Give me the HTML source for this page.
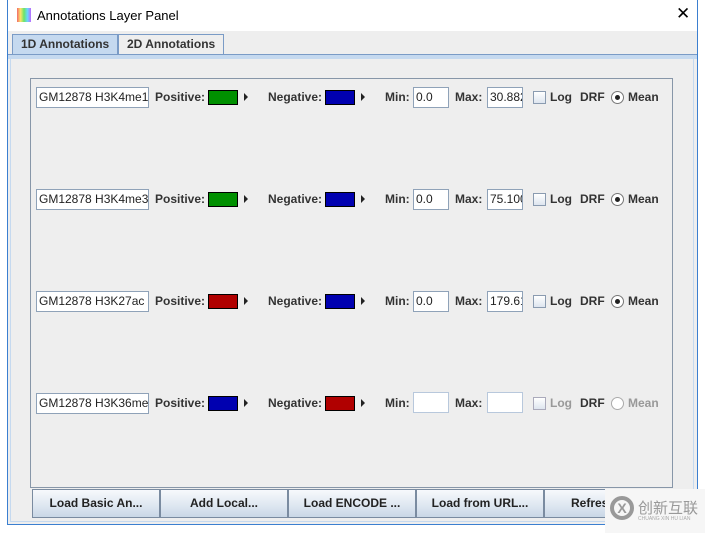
<!DOCTYPE html>
<html><head><style>
*{box-sizing:border-box}
body{margin:0;width:705px;height:533px;background:#fff;position:relative;overflow:hidden;font-family:"Liberation Sans",sans-serif}
.a{position:absolute}
.win{left:7px;top:0;width:691px;height:525px;border:1px solid #3b7fd0;border-top:none;background:#eeeeee}
.title{left:8px;top:0;width:689px;height:31px;background:#fff}
.lbl{font-size:12px;font-weight:bold;color:#333;position:absolute}
.tf{position:absolute;background:#fff;border:1px solid #8fa2b8;height:21px;font-size:12px;color:#222;padding:2px 0 0 2px;white-space:nowrap;overflow:hidden}
.sw{position:absolute;width:30px;height:15px;border:1px solid #000}
.ar{position:absolute;width:0;height:0;border-left:4px solid #222;border-top:4px solid transparent;border-bottom:4px solid transparent}
.cb{position:absolute;width:13px;height:13px;border:1px solid #8a9bb0;background:linear-gradient(#fff,#dde5ef)}
.rb{position:absolute;width:13px;height:13px;border:1px solid #777;border-radius:50%;background:#fff}
.btn{position:absolute;top:489px;height:29px;border:1px solid #7a8ba0;background:linear-gradient(#f7f9fc,#dde6f0 60%,#c9d7e6);font-size:12px;font-weight:bold;color:#222;text-align:center;line-height:27px}
</style></head><body>
<div class="a win"></div>
<div class="a title"></div>
<div class="a" style="left:17px;top:8px;width:14px;height:14px;background:linear-gradient(90deg,#e44,#fd4,#4d4,#4cf,#a4f);opacity:.8"></div>
<div class="a" style="left:37px;top:8px;font-size:13px;color:#000">Annotations Layer Panel</div>
<div class="a" style="left:676px;top:4px;font-size:17px;color:#000">✕</div>
<div class="a" style="left:12px;top:34px;width:106px;height:20px;background:#c5d9ef;border:1px solid #7a9bc6;border-bottom:none;font-size:12px;font-weight:bold;color:#333;padding:2px 0 0 8px">1D Annotations</div>
<div class="a" style="left:118px;top:34px;width:106px;height:20px;background:#eee;border:1px solid #7a9bc6;border-bottom:none;font-size:12px;font-weight:bold;color:#333;padding:2px 0 0 8px">2D Annotations</div>
<div class="a" style="left:8px;top:54px;width:689px;height:5px;background:#c5d9ef;border-top:1px solid #7a9bc6"></div>
<div class="a" style="left:10px;top:58px;width:684px;height:464px;border:1px solid #c5d9ef;border-top:none"></div>
<div class="a" style="left:30px;top:78px;width:643px;height:410px;border:1px solid #8796a8"></div>

<!-- rows -->
<div id="rows"></div>
<div class="tf" style="left:36px;top:87px;width:113px">GM12878 H3K4me1</div>
<div class="lbl" style="left:155px;top:90px">Positive:</div><div class="sw" style="left:208px;top:90px;background:#009000"></div><div class="ar" style="left:244px;top:93px"></div>
<div class="lbl" style="left:268px;top:90px">Negative:</div><div class="sw" style="left:325px;top:90px;background:#0000b0"></div><div class="ar" style="left:361px;top:93px"></div>
<div class="lbl" style="left:385px;top:90px">Min:</div><div class="tf" style="left:413px;top:87px;width:36px">0.0</div>
<div class="lbl" style="left:455px;top:90px">Max:</div><div class="tf" style="left:487px;top:87px;width:36px">30.882</div>
<div class="cb" style="left:533px;top:91px"></div><div class="lbl" style="left:550px;top:90px">Log</div><div class="lbl" style="left:580px;top:90px">DRF</div>
<div class="rb" style="left:611px;top:91px"><div class="a" style="left:3px;top:3px;width:5px;height:5px;border-radius:50%;background:#222"></div></div><div class="lbl" style="left:628px;top:90px">Mean</div>

<div class="tf" style="left:36px;top:189px;width:113px">GM12878 H3K4me3</div>
<div class="lbl" style="left:155px;top:192px">Positive:</div><div class="sw" style="left:208px;top:192px;background:#009000"></div><div class="ar" style="left:244px;top:195px"></div>
<div class="lbl" style="left:268px;top:192px">Negative:</div><div class="sw" style="left:325px;top:192px;background:#0000b0"></div><div class="ar" style="left:361px;top:195px"></div>
<div class="lbl" style="left:385px;top:192px">Min:</div><div class="tf" style="left:413px;top:189px;width:36px">0.0</div>
<div class="lbl" style="left:455px;top:192px">Max:</div><div class="tf" style="left:487px;top:189px;width:36px">75.100</div>
<div class="cb" style="left:533px;top:193px"></div><div class="lbl" style="left:550px;top:192px">Log</div><div class="lbl" style="left:580px;top:192px">DRF</div>
<div class="rb" style="left:611px;top:193px"><div class="a" style="left:3px;top:3px;width:5px;height:5px;border-radius:50%;background:#222"></div></div><div class="lbl" style="left:628px;top:192px">Mean</div>

<div class="tf" style="left:36px;top:291px;width:113px">GM12878 H3K27ac</div>
<div class="lbl" style="left:155px;top:294px">Positive:</div><div class="sw" style="left:208px;top:294px;background:#b00000"></div><div class="ar" style="left:244px;top:297px"></div>
<div class="lbl" style="left:268px;top:294px">Negative:</div><div class="sw" style="left:325px;top:294px;background:#0000b0"></div><div class="ar" style="left:361px;top:297px"></div>
<div class="lbl" style="left:385px;top:294px">Min:</div><div class="tf" style="left:413px;top:291px;width:36px">0.0</div>
<div class="lbl" style="left:455px;top:294px">Max:</div><div class="tf" style="left:487px;top:291px;width:36px">179.61</div>
<div class="cb" style="left:533px;top:295px"></div><div class="lbl" style="left:550px;top:294px">Log</div><div class="lbl" style="left:580px;top:294px">DRF</div>
<div class="rb" style="left:611px;top:295px"><div class="a" style="left:3px;top:3px;width:5px;height:5px;border-radius:50%;background:#222"></div></div><div class="lbl" style="left:628px;top:294px">Mean</div>

<div class="tf" style="left:36px;top:393px;width:113px">GM12878 H3K36me</div>
<div class="lbl" style="left:155px;top:396px">Positive:</div><div class="sw" style="left:208px;top:396px;background:#0000b0"></div><div class="ar" style="left:244px;top:399px"></div>
<div class="lbl" style="left:268px;top:396px">Negative:</div><div class="sw" style="left:325px;top:396px;background:#b00000"></div><div class="ar" style="left:361px;top:399px"></div>
<div class="lbl" style="left:385px;top:396px">Min:</div><div class="tf" style="left:413px;top:392px;width:36px;border-color:#b8c8dc"></div>
<div class="lbl" style="left:455px;top:396px">Max:</div><div class="tf" style="left:487px;top:392px;width:36px;border-color:#b8c8dc"></div>
<div class="cb" style="left:533px;top:397px;border-color:#aab"></div><div class="lbl" style="left:550px;top:396px;color:#999">Log</div><div class="lbl" style="left:580px;top:396px">DRF</div>
<div class="rb" style="left:611px;top:397px;border-color:#aaa"></div><div class="lbl" style="left:628px;top:396px;color:#999">Mean</div>

<div class="btn" style="left:32px;width:128px">Load Basic An...</div>
<div class="btn" style="left:160px;width:128px">Add Local...</div>
<div class="btn" style="left:288px;width:128px">Load ENCODE ...</div>
<div class="btn" style="left:416px;width:128px">Load from URL...</div>
<div class="btn" style="left:544px;width:128px;text-align:left;padding-left:26px">Refresh</div>
<div class="a" style="left:605px;top:489px;width:100px;height:44px;background:#f6f6f6"></div>
<div class="a" style="left:610px;top:496px;width:24px;height:24px;border:4px solid #999;border-radius:50%;color:#999;font-size:14px;font-weight:bold;text-align:center;line-height:16px">X</div>
<div class="a" style="left:638px;top:497px;font-size:15px;color:#999;font-family:'Noto Sans CJK SC',sans-serif">创新互联</div>
<div class="a" style="left:638px;top:516px;font-size:5px;color:#aaa">CHUANG XIN HU LIAN</div>
</body></html>
